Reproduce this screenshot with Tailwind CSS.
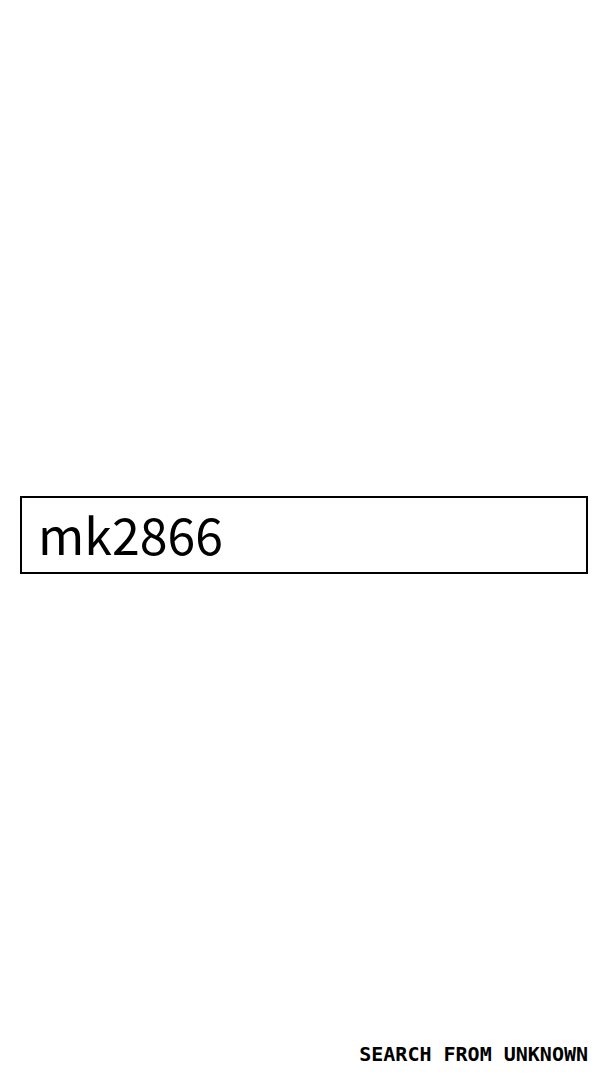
<!DOCTYPE html>
<html lang="en">
<head>
<meta charset="utf-8">
<meta name="viewport" content="width=device-width, initial-scale=1">
<title>Search from unknown</title>
<script src="https://cdn.jsdelivr.net/npm/@tailwindcss/browser@4"></script>
</head>
<body class="flex min-h-screen flex-col bg-white px-5 text-black">
<main class="flex grow flex-col justify-center pt-7">
<form role="search">
<input type="text" aria-label="Search" value="mk2866" class="block h-[78px] w-full border-2 border-black bg-white px-4 pb-1 font-['Noto_Sans_CJK_SC',sans-serif] text-[50px] leading-[70px] outline-none">
</form>
</main>
<footer class="flex justify-end pb-[14px]">
<p class="font-['DejaVu_Sans_Mono','Liberation_Mono',monospace] text-[20px] leading-6 font-bold">SEARCH FROM UNKNOWN</p>
</footer>
</body>
</html>
